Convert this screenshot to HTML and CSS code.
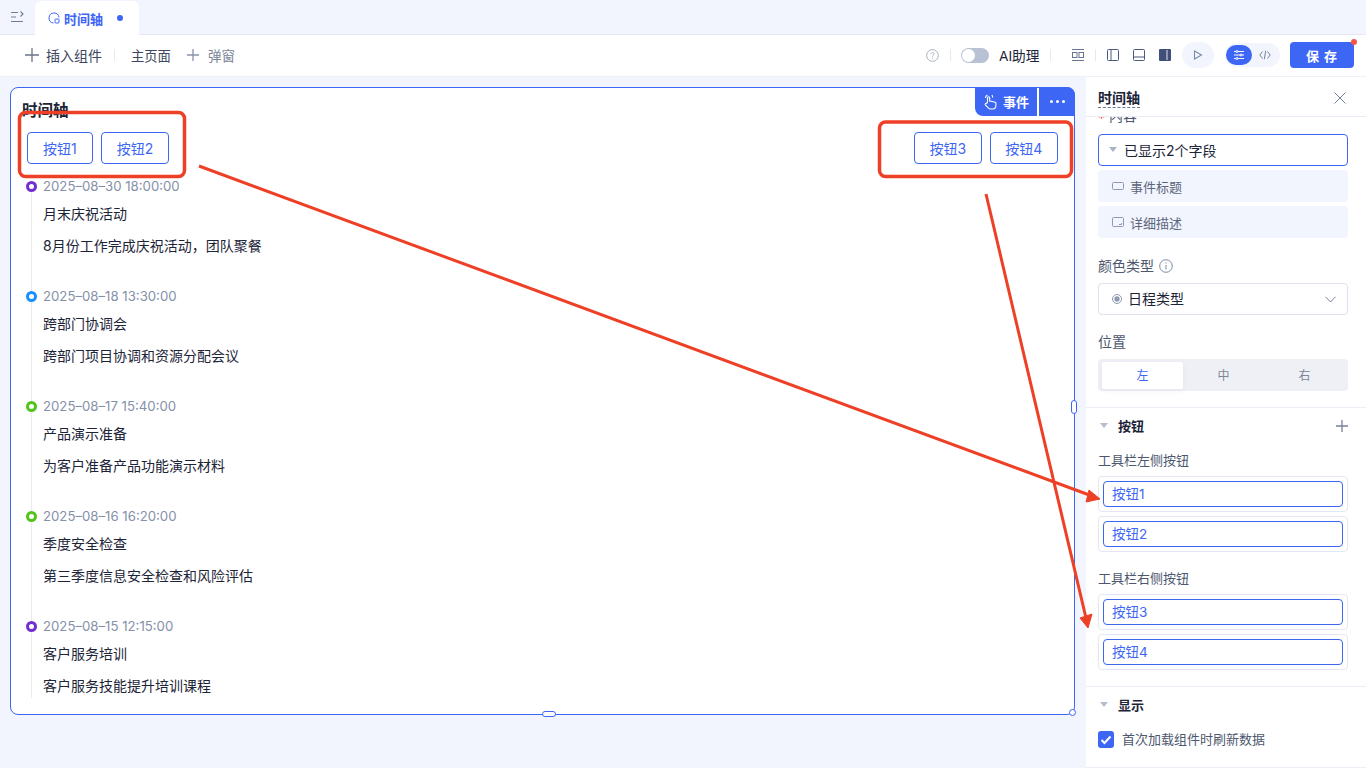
FILE: index.html
```html
<!DOCTYPE html>
<html lang="zh-CN">
<head>
<meta charset="utf-8">
<title>时间轴</title>
<link rel="stylesheet" href="styles.css">
</head>
<body>
<div class="app">
  <header class="tabbar">
    <button class="collapse" aria-label="折叠">
      <svg width="14" height="14" viewBox="0 0 14 14" fill="none" stroke="#6f7c96" stroke-width="1.1"><path d="M1 2.500h7M1 7h5M1 11.500h12M10.500 1.500 13 4l-2.500 2.500"/></svg>
    </button>
    <div class="tab">
      <svg width="12" height="12" viewBox="0 0 12 12" fill="none" stroke="#3e66f5" stroke-width="1"><path d="M5.500 11A5 5 0 1 1 11 5.500"/><rect x="7" y="7" width="4" height="4" rx=".8"/></svg>
      <span class="tab-name">时间轴</span>
      <i class="tab-dot"></i>
    </div>
  </header>

  <nav class="toolbar">
    <div class="tool-add">
      <svg width="14" height="14" viewBox="0 0 14 14" stroke="#6b7488" stroke-width="1.300"><path d="M7 0v14M0 7h14"/></svg>
      <span>插入组件</span>
    </div>
    <i class="vsep sep-a"></i>
    <span class="tool-page">主页面</span>
    <div class="tool-popup">
      <svg width="12" height="12" viewBox="0 0 12 12" stroke="#8a94a8" stroke-width="1.300"><path d="M6 0v12M0 6h12"/></svg>
      <span>弹窗</span>
    </div>
    <div class="tool-right">
      <svg class="ic-help" width="13" height="13" viewBox="0 0 14 14" fill="none" stroke="#a3abbb"><circle cx="7" cy="7" r="6.300"/><path d="M5.300 5.500a1.700 1.700 0 1 1 2.600 1.400c-.6.400-.9.700-.9 1.300M7 9.500v1"/></svg>
      <i class="vsep sep-b"></i>
      <span class="switch"><i></i></span>
      <span class="ai">AI助理</span>
      <i class="vsep sep-c"></i>
      <svg class="ic-a" width="12" height="12" viewBox="0 0 12 12" fill="none" stroke="#6a7690"><path d="M0 .5h12M0 11.500h12"/><rect x=".5" y="3.500" width="4.500" height="5"/><rect x="7" y="3.500" width="4.500" height="5"/></svg>
      <i class="vsep sep-d"></i>
      <svg class="ic-b" width="12" height="12" viewBox="0 0 12 12" fill="none" stroke="#4a5a7f"><rect x=".5" y=".5" width="11" height="11" rx="1"/><path d="M4 .5v11"/></svg>
      <svg class="ic-c" width="12" height="12" viewBox="0 0 12 12" fill="none" stroke="#4a5a7f"><rect x=".5" y=".5" width="11" height="11" rx="1"/><path d="M.5 8h11"/></svg>
      <svg class="ic-d" width="12" height="12" viewBox="0 0 12 12"><rect width="12" height="12" rx="1" fill="#3f4f78"/><rect x="7.500" y="1" width="1" height="10" fill="#dfe4ee"/></svg>
      <span class="play"><svg width="10" height="10" viewBox="0 0 10 10" fill="none" stroke="#7e8ba8" stroke-width="1.100"><path d="M1.500 1v8l7-4z"/></svg></span>
      <div class="mode">
        <span class="mode-on"><svg width="12" height="10" viewBox="0 0 12 10" fill="none" stroke="#fff"><path d="M1 1.500h10M1 5h10M1 8.500h10"/><circle cx="4" cy="1.500" r="1" fill="#3e66f5"/><circle cx="8" cy="5" r="1" fill="#3e66f5"/><circle cx="4" cy="8.500" r="1" fill="#3e66f5"/></svg></span>
        <span class="mode-off"><svg width="12" height="10" viewBox="0 0 12 10" fill="none" stroke="#77829c"><path d="M3.500 1.500 .8 5l2.700 3.500M8.500 1.500 11.200 5 8.500 8.500M6.700 .8 5.300 9.200"/></svg></span>
      </div>
      <button class="save">保 存<i class="save-dot"></i></button>
    </div>
  </nav>

  <main class="workspace">
    <section class="canvas">
      <div class="card">
        <div class="card-actions">
          <span class="act-event">
            <svg width="15" height="16" viewBox="0 0 15 16" fill="none" stroke="#fff" stroke-width="1.100"><path d="M4.500 8V3.800a1.100 1.100 0 0 1 2.200 0V7l4.800 1c1 .2 1.600 1 1.500 2l-.3 2.500c-.2 1.300-1.200 2.500-2.600 2.500H7.500c-.8 0-1.500-.4-2-1L2.300 10.800c-.6-.9.500-2 1.400-1.300z"/><path d="M2.500 4a3.200 3.200 0 0 1 2-3M8.800 1a3.200 3.200 0 0 1 .8 2.500"/></svg>
            事件
          </span>
          <span class="act-more"><i></i><i></i><i></i></span>
        </div>
        <h2 class="card-title">时间轴</h2>
        <div class="btn-row">
          <div class="btn-group">
            <button class="ghost">按钮1</button>
            <button class="ghost">按钮2</button>
          </div>
          <div class="btn-group">
            <button class="ghost">按钮3</button>
            <button class="ghost">按钮4</button>
          </div>
        </div>
        <ol class="timeline">
          <li class="tl-item"><i class="tl-dot purple"></i><time>2025–08–30 18:00:00</time><p>月末庆祝活动</p><p>8月份工作完成庆祝活动，团队聚餐</p></li>
          <li class="tl-item"><i class="tl-dot blue"></i><time>2025–08–18 13:30:00</time><p>跨部门协调会</p><p>跨部门项目协调和资源分配会议</p></li>
          <li class="tl-item"><i class="tl-dot green"></i><time>2025–08–17 15:40:00</time><p>产品演示准备</p><p>为客户准备产品功能演示材料</p></li>
          <li class="tl-item"><i class="tl-dot green"></i><time>2025–08–16 16:20:00</time><p>季度安全检查</p><p>第三季度信息安全检查和风险评估</p></li>
          <li class="tl-item last"><i class="tl-dot purple"></i><time>2025–08–15 12:15:00</time><p>客户服务培训</p><p>客户服务技能提升培训课程</p></li>
        </ol>
        <i class="handle h-right"></i>
        <i class="handle h-bottom"></i>
        <i class="handle h-corner"></i>
      </div>
    </section>

    <aside class="panel">
      <div class="panel-head">
        <span class="panel-title">时间轴</span>
        <svg class="panel-close" width="12" height="12" viewBox="0 0 12 12" stroke="#75809a" stroke-width="1"><path d="M.5.5l11 11M11.500.5l-11 11"/></svg>
      </div>
      <div class="panel-body">
        <div class="sec sec-first">
          <div class="label content-label"><span class="req">*</span> 内容</div>
          <div class="field-head"><i class="tri"></i>已显示2个字段</div>
          <div class="field-item"><svg width="12" height="8" viewBox="0 0 12 8" fill="none" stroke="#8e9ab2"><rect x=".5" y=".5" width="11" height="7" rx="1"/></svg>事件标题</div>
          <div class="field-item"><svg width="12" height="10" viewBox="0 0 12 10" fill="none" stroke="#8e9ab2"><rect x=".5" y=".5" width="11" height="9" rx="1"/><path d="M7 7.500h2.500V6"/></svg>详细描述</div>
          <div class="label label-color">颜色类型
            <svg width="14" height="14" viewBox="0 0 14 14" fill="none" stroke="#7e8ba4"><circle cx="7" cy="7" r="6.300"/><path d="M7 6v4.500M7 3.500v1.200"/></svg>
          </div>
          <div class="select">
            <svg width="10" height="10" viewBox="0 0 10 10"><circle cx="5" cy="5" r="4.500" fill="none" stroke="#8e9ab2"/><circle cx="5" cy="5" r="2.700" fill="#8e9ab2"/></svg>
            <span class="select-text">日程类型</span>
            <svg class="chev" width="11" height="7" viewBox="0 0 11 7" fill="none" stroke="#75809a"><path d="M.5.800 5.500 6l5-5.200"/></svg>
          </div>
          <div class="label label-pos">位置</div>
          <div class="segment">
            <span class="seg on">左</span><span class="seg">中</span><span class="seg">右</span>
          </div>
        </div>
        <div class="sec sec-btn">
          <div class="sec-head"><i class="tri small"></i><b>按钮</b>
            <svg class="sec-plus" width="12" height="12" viewBox="0 0 12 12" stroke="#75809a" stroke-width="1.300"><path d="M6 0v12M0 6h12"/></svg>
          </div>
          <div class="label label-bar">工具栏左侧按钮</div>
          <div class="btn-slot"><div class="btn-input">按钮1</div></div>
          <div class="btn-slot"><div class="btn-input">按钮2</div></div>
          <div class="label label-bar2">工具栏右侧按钮</div>
          <div class="btn-slot"><div class="btn-input">按钮3</div></div>
          <div class="btn-slot"><div class="btn-input">按钮4</div></div>
        </div>
        <div class="sec sec-show">
          <div class="sec-head"><i class="tri small"></i><b>显示</b></div>
          <label class="check">
            <span class="box"><svg width="12" height="10" viewBox="0 0 12 10" fill="none" stroke="#fff" stroke-width="2"><path d="M1.500 5l3 3 6-6.500"/></svg></span>
            <span class="check-text">首次加载组件时刷新数据</span>
          </label>
        </div>
      </div>
    </aside>
  </main>

  <svg class="annot" width="1366" height="768" viewBox="0 0 1366 768" fill="none">
    <rect x="19.500" y="112.500" width="165" height="64" rx="6" stroke="#ee4026" stroke-width="3.500"/>
    <rect x="879.500" y="122" width="192" height="54.500" rx="6" stroke="#ee4026" stroke-width="3.500"/>
    <path d="M199 166 1092 496" stroke="#ee4026" stroke-width="3"/>
    <path d="M1100 499 1089 490 1086 502Z" fill="#ee4026" stroke="#ee4026"/>
    <path d="M986 194 1086 618" stroke="#ee4026" stroke-width="3"/>
    <path d="M1088 628 1080 618 1092 614Z" fill="#ee4026" stroke="#ee4026"/>
  </svg>
</div>
</body>
</html>
```
FILE: styles.css
```css
* { box-sizing: border-box; }
html, body { margin: 0; padding: 0; }
body {
  width: 1366px;
  height: 768px;
  overflow: hidden;
  font-family: Inter, "Noto Sans CJK SC", sans-serif;
  font-size: 14px;
  color: #1c2438;
  background: #f2f5fd;
}
button { font: inherit; cursor: pointer; }
.app { position: relative; width: 1366px; height: 768px; display: flex; flex-direction: column; }

/* tab bar */
.tabbar { height: 35px; display: flex; align-items: flex-end; background: #f2f5fd; border-bottom: 1px solid #e4e8f4; }
.collapse { width: 35px; height: 34px; padding: 0 0 0 10px; border: 0; background: none; display: flex; align-items: center; }
.tab { width: 104px; height: 34px; margin-bottom: -1px; padding: 0 0 0 13px; display: flex; align-items: center; background: #fff; border-radius: 6px 6px 0 0; }
.tab-name { margin-left: 4px; font-size: 13px; font-weight: 600; color: #3e66f5; }
.tab-dot { width: 6px; height: 6px; margin-left: 14px; border-radius: 50%; background: #3e66f5; }

/* tool bar */
.toolbar { height: 42px; padding-left: 25px; padding-bottom: 1px; display: flex; align-items: center; background: #fff; border-bottom: 1px solid #eef0f7; }
.tool-add { display: flex; align-items: center; gap: 7px; font-size: 14px; color: #3d4660; }
.vsep { display: block; width: 1px; height: 12px; background: #e6e9f2; }
.sep-a { margin: 0 16px 0 12px; }
.tool-page { font-size: 13.300px; color: #3d4660; }
.tool-popup { margin-left: 16px; display: flex; align-items: center; gap: 9px; font-size: 13.500px; color: #7b859a; }
.tool-right { margin-left: auto; display: flex; align-items: center; padding-right: 12px; }
.sep-b { margin: 0 10px 0 11px; }
.switch { width: 28px; height: 15px; padding: 1px; border-radius: 8px; background: #b9c2d4; }
.switch i { display: block; width: 13px; height: 13px; border-radius: 50%; background: #fff; }
.ai { width: 41px; margin-left: 10px; font-size: 13.700px; white-space: nowrap; color: #1c2438; }
.sep-c { margin: 0 21px 0 10px; }
.sep-d { margin: 0 11px 0 11px; }
.ic-c { margin-left: 14px; }
.ic-d { margin-left: 14px; }
.play { width: 32px; height: 26px; margin-left: 11px; display: flex; align-items: center; justify-content: center; border-radius: 13px; background: #f2f5fd; }
.mode { width: 55px; height: 24px; margin-left: 11px; padding-left: 1px; display: flex; align-items: center; border-radius: 12px; background: #f2f5fd; }
.mode-on { width: 26px; height: 20px; display: flex; align-items: center; justify-content: center; border-radius: 10px; background: #3e66f5; }
.mode-off { width: 26px; display: flex; align-items: center; justify-content: center; }
.save { position: relative; width: 64px; height: 26px; margin-left: 10px; padding: 0; border: 0; border-radius: 4px; background: #3e66f5; color: #fff; font-size: 13px; font-weight: 700; letter-spacing: 1px; }
.save-dot { position: absolute; top: -3px; right: -3px; width: 6px; height: 6px; border-radius: 50%; background: #f4544a; }

/* workspace */
.workspace { flex: 1; min-height: 0; display: flex; }
.canvas { width: 1086px; padding: 10px 11px 0 10px; background: #f2f5fd; }
.card { position: relative; height: 628px; padding: 11px 16px 0 11px; background: #fff; border: 1px solid #3e66f5; border-radius: 8px; }
.card-title { margin: 0; height: 24px; font-size: 15.500px; line-height: 24px; font-weight: 600; color: #1c2438; }
.card-actions { position: absolute; top: -1px; right: -1px; display: flex; gap: 2px; height: 29px; }
.act-event { width: 62px; display: flex; align-items: center; justify-content: center; gap: 5px; font-size: 13px; font-weight: 700; color: #fff; background: #3e66f5; border-radius: 0 0 0 8px; }
.act-more { width: 36px; display: flex; align-items: center; justify-content: center; gap: 3px; background: #3e66f5; border-radius: 0 8px 0 0; }
.act-more i { width: 3px; height: 3px; border-radius: 50%; background: #fff; }
.btn-row { margin-top: 9px; padding-left: 5px; display: flex; justify-content: space-between; }
.btn-group { display: flex; gap: 8px; }
.ghost { height: 32px; padding: 0 15px; border: 1px solid #3e66f5; border-radius: 4px; background: #fff; color: #3e66f5; font-size: 14px; }
.btn-group + .btn-group .ghost { padding: 0 14.600px; }
.timeline { margin: 0; padding: 11px 0 0 21px; list-style: none; }
.tl-item { position: relative; height: 110px; }
.tl-item.last { height: 83px; }
.tl-item::before { content: ""; position: absolute; left: -12px; top: 11px; bottom: -11px; width: 1px; background: #e9ebf1; }
.tl-item.last::before { bottom: 0; }
.tl-dot { position: absolute; z-index: 1; left: -17px; top: 6px; width: 11px; height: 11px; border-radius: 50%; border: 3px solid; background: #fff; }
.purple { border-color: #722ed1; }
.blue { border-color: #1890ff; }
.green { border-color: #52c41a; }
.tl-item time { display: block; height: 22px; font-size: 13.200px; line-height: 22px; color: #8490a8; }
.tl-item p { margin: 10px 0 0; height: 22px; font-size: 14px; line-height: 22px; color: #1c2438; }
.tl-item p:first-of-type { margin-top: 6px; }
.handle { position: absolute; display: block; background: #fff; border: 1px solid #3e66f5; }
.h-right { right: -3px; top: 312px; width: 6px; height: 14px; border-radius: 3px; }
.h-bottom { left: 531px; bottom: -3px; width: 14px; height: 6px; border-radius: 3px; }
.h-corner { right: -2px; bottom: -2px; width: 7px; height: 7px; border-radius: 50%; }

/* panel */
.panel { width: 280px; display: flex; flex-direction: column; background: #fff; border-bottom: 1px solid #eceef5; }
.panel-head { height: 40px; padding: 0 20px 0 12px; display: flex; align-items: center; justify-content: space-between; border-bottom: 1px solid #e9ecf4; }
.panel-title { font-size: 14px; font-weight: 600; line-height: 19px; border-bottom: 1px dashed #6a7690; margin-top: 2px; }
.panel-close { margin-top: 2px; }
.panel-body { flex: 1; min-height: 0; overflow: hidden; }
.sec { padding: 0 18px 0 12px; }
.sec-first { margin-top: -10px; height: 301px; border-bottom: 1px solid #eceef5; }
.label { font-size: 14px; line-height: 18px; color: #4d576e; }
.content-label { height: 18px; }
.req { display: inline-block; vertical-align: -3px; color: #ee4026; }
.field-head { height: 32px; margin-top: 9px; padding-left: 10px; display: flex; align-items: center; gap: 7px; border: 1px solid #3e66f5; border-radius: 4px; font-size: 14px; color: #1c2438; }
.tri { display: block; width: 0; height: 0; border-left: 4px solid transparent; border-right: 4px solid transparent; border-top: 5px solid #aab3c5; margin-bottom: 2px; }
.tri.small { border-top-color: #b5bdcd; }
.field-item { height: 32px; margin-top: 4px; padding-left: 14px; display: flex; align-items: center; gap: 6px; border-radius: 4px; background: #f2f5fd; font-size: 13px; color: #5c667d; }
.label-color { margin-top: 19px; display: flex; align-items: center; gap: 5px; }
.select { height: 32px; margin-top: 8px; padding: 0 11px 0 13px; display: flex; align-items: center; gap: 6px; border: 1px solid #dde2ee; border-radius: 4px; font-size: 14px; color: #1c2438; }
.select-text { margin-bottom: 2px; }
.chev { margin-left: auto; }
.label-pos { margin-top: 18px; }
.segment { height: 32px; margin-top: 8px; padding: 3px 3px 2px 4px; display: flex; background: #eff0f6; border-radius: 4px; }
.seg { flex: 1; padding-bottom: 2px; display: flex; align-items: center; justify-content: center; font-size: 12px; color: #7c8598; }
.seg.on { border-radius: 2px; background: #fff; color: #3e66f5; box-shadow: 0 2px 6px rgba(60, 70, 110, .06); }
.sec-head { height: 20px; display: flex; align-items: center; font-size: 13px; }
.sec-head b { margin-left: 10px; margin-bottom: 2px; font-weight: 600; color: #1c2438; }
.sec-head .tri { margin-left: 2px; width: 8px; }
.sec-plus { margin-left: auto; }
.sec-btn { height: 279px; padding-top: 8px; border-bottom: 1px solid #eceef5; }
.label-bar { margin-top: 15px; height: 18px; font-size: 13px; }
.label-bar2 { margin-top: 17px; height: 18px; font-size: 13px; }
.btn-slot { height: 36px; margin-top: 4px; padding: 4px; border: 1px solid #e3e7f1; border-radius: 4px; }
.label-bar + .btn-slot, .label-bar2 + .btn-slot { margin-top: 7px; }
.btn-input { height: 26px; padding: 0 0 2px 8px; display: flex; align-items: center; border: 1px solid #3e66f5; border-radius: 4px; font-size: 13.500px; color: #3e66f5; }
.sec-show { padding-top: 8px; }
.check { margin-top: 14px; display: flex; align-items: center; gap: 8px; font-size: 13px; color: #4d576e; }
.check-text { margin-bottom: 2px; }
.box { width: 16px; height: 17px; display: flex; align-items: center; justify-content: center; border-radius: 3px; background: #3e66f5; }

/* annotations drawn over the screenshot */
.annot { position: absolute; left: 0; top: 0; pointer-events: none; }
```
